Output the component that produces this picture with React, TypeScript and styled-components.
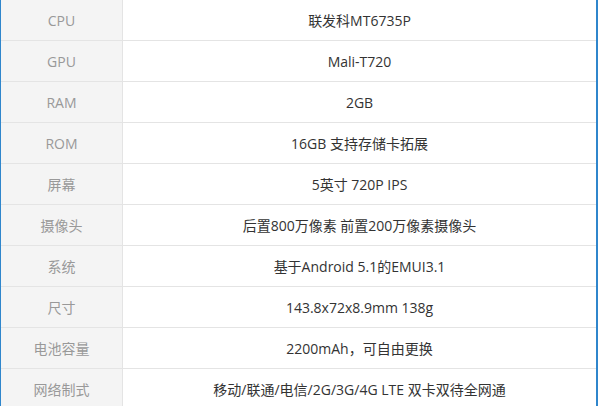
import React from "react";
import styled, { createGlobalStyle } from "styled-components";

const Global = createGlobalStyle`
  html, body { margin: 0; padding: 0; background: #fff; }
  body { font-family: "Open Sans", "Noto Sans CJK SC", sans-serif; }
`;

const Frame = styled.div`
  width: 598px;
  height: 406px;
  overflow: hidden;
  box-sizing: border-box;
  border-left: 1px solid #2f86cc;
  border-right: 2px solid #2f86cc;
  box-shadow: inset 1px 0 0 #a9d0ef;
  background: #fff;
`;

const Table = styled.div`
  display: grid;
  grid-template-columns: 122px 1fr;
`;

const Label = styled.div`
  height: 40px;
  display: flex;
  align-items: center;
  justify-content: center;
  background: #f4f4f4;
  color: #999;
  font-size: 14px;
  border-bottom: 1px solid #e4e4e4;
  border-right: 1px solid #e4e4e4;
`;

const Value = styled.div`
  height: 40px;
  display: flex;
  align-items: center;
  justify-content: center;
  color: #333;
  font-size: 14px;
  border-bottom: 1px solid #e4e4e4;
`;

const rows: [string, string][] = [
  ["CPU", "联发科MT6735P"],
  ["GPU", "Mali-T720"],
  ["RAM", "2GB"],
  ["ROM", "16GB 支持存储卡拓展"],
  ["屏幕", "5英寸 720P IPS"],
  ["摄像头", "后置800万像素 前置200万像素摄像头"],
  ["系统", "基于Android 5.1的EMUI3.1"],
  ["尺寸", "143.8x72x8.9mm 138g"],
  ["电池容量", "2200mAh，可自由更换"],
  ["网络制式", "移动/联通/电信/2G/3G/4G LTE 双卡双待全网通"],
];

export default function App() {
  return (
    <>
      <Global />
      <Frame>
        <Table>
          {rows.map(([k, v]) => (
            <React.Fragment key={k}>
              <Label>{k}</Label>
              <Value>{v}</Value>
            </React.Fragment>
          ))}
        </Table>
      </Frame>
    </>
  );
}
